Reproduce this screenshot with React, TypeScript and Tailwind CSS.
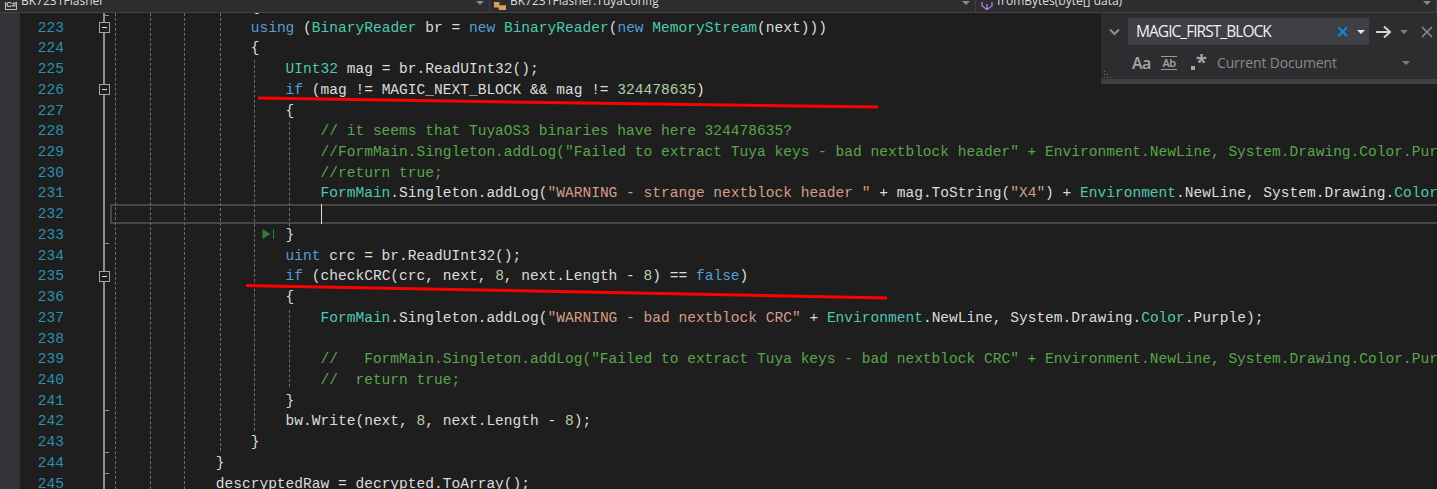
const KW = 'text-[#569cd6]'
const TY = 'text-[#4ec9b0]'
const STR = 'text-[#d69d85]'
const CM = 'text-[#57a64a]'
const NUM = 'text-[#b5cea8]'

type Part = [string, string?]

// line number, indent (spaces), coloured pieces
const lines: { n: number; indent: number; parts: Part[]; fold?: boolean }[] = [
  { n: 222, indent: 16, parts: [['{']] },
  { n: 223, indent: 16, fold: true, parts: [['using', KW], [' ('], ['BinaryReader', TY], [' br = '], ['new', KW], [' '], ['BinaryReader', TY], ['('], ['new', KW], [' '], ['MemoryStream', TY], ['(next)))']] },
  { n: 224, indent: 16, parts: [['{']] },
  { n: 225, indent: 20, parts: [['UInt32', TY], [' mag = br.ReadUInt32();']] },
  { n: 226, indent: 20, fold: true, parts: [['if', KW], [' (mag != MAGIC_NEXT_BLOCK && mag != '], ['324478635', NUM], [')']] },
  { n: 227, indent: 20, parts: [['{']] },
  { n: 228, indent: 24, parts: [['// it seems that TuyaOS3 binaries have here 324478635?', CM]] },
  { n: 229, indent: 24, parts: [['//FormMain.Singleton.addLog("Failed to extract Tuya keys - bad nextblock header" + Environment.NewLine, System.Drawing.Color.Purple);', CM]] },
  { n: 230, indent: 24, parts: [['//return true;', CM]] },
  { n: 231, indent: 24, parts: [['FormMain', TY], ['.Singleton.addLog('], ['"WARNING - strange nextblock header "', STR], [' + mag.ToString('], ['"X4"', STR], [') + '], ['Environment', TY], ['.NewLine, System.Drawing.'], ['Color', TY], ['.Purple);']] },
  { n: 232, indent: 0, parts: [] },
  { n: 233, indent: 20, parts: [['}']] },
  { n: 234, indent: 20, parts: [['uint', KW], [' crc = br.ReadUInt32();']] },
  { n: 235, indent: 20, fold: true, parts: [['if', KW], [' (checkCRC(crc, next, '], ['8', NUM], [', next.Length - '], ['8', NUM], [') == '], ['false', KW], [')']] },
  { n: 236, indent: 20, parts: [['{']] },
  { n: 237, indent: 24, parts: [['FormMain', TY], ['.Singleton.addLog('], ['"WARNING - bad nextblock CRC"', STR], [' + '], ['Environment', TY], ['.NewLine, System.Drawing.'], ['Color', TY], ['.Purple);']] },
  { n: 238, indent: 0, parts: [] },
  { n: 239, indent: 24, parts: [['//   FormMain.Singleton.addLog("Failed to extract Tuya keys - bad nextblock CRC" + Environment.NewLine, System.Drawing.Color.Purple);', CM]] },
  { n: 240, indent: 24, parts: [['//  return true;', CM]] },
  { n: 241, indent: 20, parts: [['}']] },
  { n: 242, indent: 20, parts: [['bw.Write(next, '], ['8', NUM], [', next.Length - '], ['8', NUM], [');']] },
  { n: 243, indent: 16, parts: [['}']] },
  { n: 244, indent: 12, parts: [['}']] },
  { n: 245, indent: 12, parts: [['descryptedRaw = decrypted.ToArray();']] },
]

// dashed indent guides: x, top, bottom in page pixels
const guides = [
  [115, 13, 489],
  [150, 13, 489],
  [184, 13, 489],
  [220, 13, 451],
  [254, 60, 431],
  [289, 122, 226],
  [289, 310, 387],
]

const foldTicks = [15, 243, 410, 452, 473]

function Combo({ width, icon, label }: { width: string; icon: React.ReactNode; label: string }) {
  return (
    <div className={`${width} flex items-end border-r border-[#3f3f46] h-full shrink-0 relative`}>
      <div className="flex items-center gap-[4px] h-[12px] overflow-hidden">
        {icon}
        <span className="text-[12px] leading-[12px] -translate-y-[5px] text-[#dcdcdc] whitespace-pre font-['Open_Sans',sans-serif]">{label}</span>
      </div>
      <span className="absolute right-[5px] top-[1px] border-x-[4px] border-t-[4px] border-x-transparent border-t-[#8a8a8a]" />
    </div>
  )
}

function Triangle({ color }: { color: string }) {
  return <span className={`border-x-[4px] border-t-[4px] border-x-transparent ${color}`} />
}

function FindPanel() {
  return (
    <div className="absolute left-[1101px] top-[12px] w-[336px] h-[72px] bg-[#2d2d30] border-b-[5px] border-[#3f3f46] font-['Open_Sans',sans-serif]">
      <div className="flex items-center h-[27px] mt-[6px]">
        <svg width="27" height="27" viewBox="0 0 27 27" fill="none">
          <path d="M9 11.5l4.5 4.5 4.5-4.5" stroke="#8f8f8f" strokeWidth="2" />
        </svg>
        <div className="w-[241px] h-[27px] bg-[#3f3f46] flex items-center pl-[8px] pr-[4px]">
          <span className="text-[15.5px] tracking-[-0.95px] text-[#f1f1f1] flex-1">MAGIC_FIRST_BLOCK</span>
          <svg width="12" height="12" viewBox="0 0 12 12" className="mr-[8px]">
            <path d="M1.5 1.5l8.5 8.5M10 1.5l-8.5 8.5" stroke="#0e8ae0" strokeWidth="2" fill="none" />
          </svg>
          <Triangle color="border-t-[#e8e8e8]" />
        </div>
        <svg width="18" height="14" viewBox="0 0 18 14" fill="none" className="ml-[6px]">
          <path d="M1 7h14M9 1.5L15 7l-6 5.5" stroke="#d4d4d4" strokeWidth="2" />
        </svg>
        <span className="ml-[7px] flex"><Triangle color="border-t-[#7f7f7f]" /></span>
        <svg width="12" height="12" viewBox="0 0 12 12" className="ml-[13px]">
          <path d="M1 1l10 10M11 1L1 11" stroke="#8a8a8a" strokeWidth="1.6" fill="none" />
        </svg>
      </div>
      <div className="flex items-center h-[29px] mt-[3px] pl-[31px] text-[#a5a5a5] relative">
        <span className="text-[16px] leading-none w-[29px] font-semibold tracking-[-0.5px]">Aa</span>
        <span className="text-[11px] leading-[12px] font-semibold w-[16px] text-center border-y border-[#9a9a9a] tracking-[-0.5px]">Ab</span>
        <span className="ml-[14px] flex items-end w-[16px] h-[16px] text-[#a5a5a5]">
          <span className="w-[4px] h-[4px] bg-[#a5a5a5] mb-[1px]" />
          <span className="text-[20px] leading-[18px] font-bold ml-[1px]">*</span>
        </span>
        <span className="ml-[10px] text-[14px] text-[#8a8a8a] tracking-[-0.15px]">Current Document</span>
        <span className="absolute left-[301px] top-[13px] flex"><Triangle color="border-t-[#7f7f7f]" /></span>
        <svg width="9" height="9" viewBox="0 0 9 9" className="absolute left-[3px] top-[23px]" fill="#6f6f6f">
          <rect x="0" y="0" width="1" height="1" /><rect x="0" y="3" width="1" height="1" /><rect x="0" y="6" width="1" height="1" />
          <rect x="3" y="6" width="1" height="1" /><rect x="6" y="6" width="1" height="1" /><rect x="3" y="3" width="1" height="1" />
        </svg>
      </div>
    </div>
  )
}

export default function App() {
  return (
    <div className="relative w-[1437px] h-[489px] overflow-hidden bg-[#1e1e1e]">
      {/* navigation bar, cut off at the top of the shot */}
      <div className="relative z-10 h-[13px] flex bg-[#2d2d30] border-b border-[#434346]">
        <Combo
          width="w-[490px]"
          label="BK7231Flasher"
          icon={<span className="ml-[5px] w-[12px] h-[8px] border border-t-0 border-[#a8c8a0] text-[8px] leading-[6px] text-[#d8d8d8] font-bold text-center font-['Liberation_Sans',sans-serif]">C#</span>}
        />
        <Combo
          width="w-[486px]"
          label="BK7231Flasher.TuyaConfig"
          icon={<span className="ml-[4px] w-[12px] h-[8px] bg-[#d9a05b] [clip-path:polygon(0_0,45%_0,45%_40%,100%_40%,100%_100%,40%_100%,40%_70%,0_70%)]" />}
        />
        <Combo
          width="flex-1"
          label="fromBytes(byte[] data)"
          icon={<svg width="12" height="8" viewBox="0 0 12 8" className="ml-[5px]" fill="none"><path d="M1 0v4l5 3.500 5-3.500V0M6 7.500V2" stroke="#b180d7" strokeWidth="1.300" /></svg>}
        />
      </div>

      {/* editor lines; line 222 starts under the bar */}
      <div className="-mt-[16px] font-['Liberation_Mono',monospace] text-[14.56px] text-[#dcdcdc]">
        {lines.map(l => (
          <div key={l.n} className="flex h-[20.72px] leading-[20.72px]">
            <div className="w-[20px] shrink-0 bg-[#333337]" />
            <div className="w-[44px] shrink-0 text-right text-[#2b91af]">{l.n}</div>
            <div className="w-[47px] shrink-0" />
            <div className="whitespace-pre">
              {' '.repeat(l.indent)}
              {l.parts.map(([text, color], i) => (
                <span key={i} className={color}>{text}</span>
              ))}
            </div>
          </div>
        ))}
      </div>

      {/* current line box and caret */}
      <div className="absolute left-[110px] right-0 top-[204px] h-[20px] border-2 border-r-0 border-[#464646]" />
      <div className="absolute left-[321px] top-[204px] h-[20px] w-[1px] bg-[#dcdcdc]" />

      {/* indent guides */}
      {guides.map(([x, top, bottom], i) => (
        <div
          key={i}
          className="absolute w-0 border-l border-dashed border-[#6e6e6e]"
          style={{ left: x, top, height: bottom - top }}
        />
      ))}

      {/* outlining margin */}
      <div className="absolute left-[103px] top-[13px] bottom-0 w-[2px] bg-[#8e8e8e]" />
      {foldTicks.map(y => (
        <div key={y} className="absolute left-[104px] w-[5px] h-[1px] bg-[#8e8e8e]" style={{ top: y }} />
      ))}
      {[22, 84, 271].map(y => (
        <div key={y} className="absolute left-[99px] w-[11px] h-[11px] bg-[#1e1e1e] border border-[#a5a5a5] flex items-center justify-center" style={{ top: y }}>
          <span className="w-[5px] h-[1px] bg-[#e0e0e0]" />
        </div>
      ))}

      {/* run to here glyph */}
      <svg width="13" height="10" viewBox="0 0 13 10" className="absolute left-[262px] top-[229px]">
        <path d="M0.500 0l8 5-8 5z" fill="#2f7d32" />
        <rect x="11" y="0" width="1" height="10" fill="#2f7d32" />
      </svg>

      {/* red marker strokes */}
      <svg width="1437" height="489" className="absolute left-0 top-0 pointer-events-none" fill="none">
        <path d="M258 98L480 101.500L878 107" stroke="#ff0000" strokeWidth="3" />
        <path d="M246 285.500L480 290L887 298" stroke="#ff0000" strokeWidth="3" />
      </svg>

      <FindPanel />
    </div>
  )
}
